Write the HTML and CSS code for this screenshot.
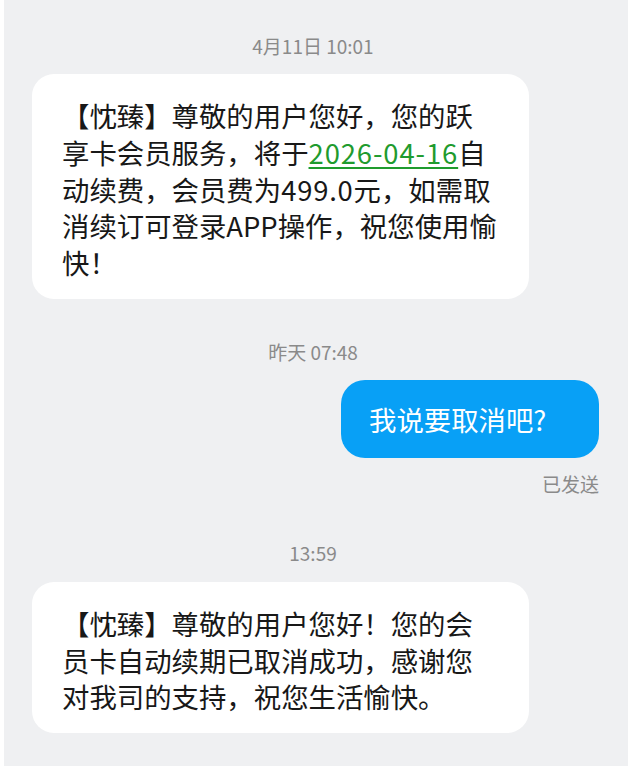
FILE: index.html
```html
<!DOCTYPE html>
<html lang="zh-CN">
<head>
<meta charset="utf-8">
<title>短信</title>
<link rel="stylesheet" href="styles.css">
</head>
<body>
<div class="screen">
  <div class="time time-first">4月11日 10:01</div>
  <div class="bubble incoming">
    <span class="line">【忱臻】尊敬的用户您好，您的跃</span>
    <span class="line">享卡会员服务，将于<span class="link">2026-04-16</span>自</span>
    <span class="line">动续费，会员费为<span class="num">499.0</span>元，如需取</span>
    <span class="line">消续订可登录APP操作，祝您使用愉</span>
    <span class="line">快！</span>
  </div>

  <div class="time time-mid">昨天 07:48</div>
  <div class="row-out">
    <div class="bubble outgoing">我说要取消吧?</div>
  </div>
  <div class="status">已发送</div>

  <div class="time time-last">13:59</div>
  <div class="bubble incoming">
    <span class="line">【忱臻】尊敬的用户您好！您的会</span>
    <span class="line">员卡自动续期已取消成功，感谢您</span>
    <span class="line">对我司的支持，祝您生活愉快。</span>
  </div>
</div>
</body>
</html>
```
FILE: styles.css
```css
html, body {
  margin: 0;
  padding: 0;
  background: #ffffff;
}

body {
  font-family: "Noto Sans CJK SC", "Noto Sans", sans-serif;
}

.screen {
  margin-left: 4px;
  width: 624px;
  height: 766px;
  box-sizing: border-box;
  background: #eff0f2;
  padding-top: 33px;
  display: flex;
  flex-direction: column;
  overflow: hidden;
}

.time {
  font-size: 19px;
  line-height: 26px;
  color: #8a8a8a;
  text-align: center;
  padding-right: 6px;
}

.time-first { margin-bottom: 15px; }
.time-mid { margin-top: 40px; margin-bottom: 15px; }
.time-last { margin-top: 43px; margin-bottom: 16px; }

.bubble {
  font-size: 27.4px;
  line-height: 36.8px;
  box-sizing: border-box;
}

.incoming {
  width: 497px;
  margin-left: 28px;
  background: #ffffff;
  color: #181818;
  border-radius: 22px;
  padding: 23px 0 18px 30px;
  white-space: nowrap;
}

.line {
  display: block;
}

.num {
  letter-spacing: 0.8px;
}

.link {
  color: #1f9b2e;
  letter-spacing: 0.9px;
  text-decoration: underline;
  text-decoration-thickness: 2px;
  text-underline-offset: 3px;
}

.row-out {
  display: flex;
  justify-content: flex-end;
  padding-right: 29px;
}

.outgoing {
  width: 258px;
  background: #08a0f6;
  color: #ffffff;
  border-radius: 24px;
  padding: 21px 0 20px 28px;
  white-space: nowrap;
}

.status {
  font-size: 19px;
  line-height: 26px;
  color: #8a8a8a;
  text-align: right;
  padding-right: 29px;
  margin-top: 13px;
}
```
